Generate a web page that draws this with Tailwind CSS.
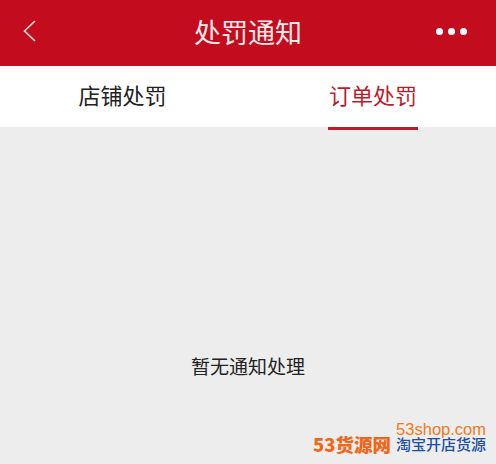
<!DOCTYPE html>
<html lang="zh-CN">
<head>
  <meta charset="UTF-8">
  <meta name="viewport" content="width=device-width, initial-scale=1.0">
  <title>处罚通知</title>
  <script src="https://cdn.jsdelivr.net/npm/@tailwindcss/browser@4"></script>
</head>
<body class="bg-[#ededed] font-['Noto_Sans_CJK_SC',sans-serif]">
  <div class="relative w-[496px] h-[464px] overflow-hidden flex flex-col">
    <!-- Header -->
    <div class="h-[66px] bg-[#c30d1e] flex items-center justify-between text-white">
      <div class="w-[80px] pl-[23px] mt-[-5px]">
        <svg width="13" height="22" viewBox="0 0 13 22" fill="none" stroke="#f6d5d8" stroke-width="1.7"><path d="M12 1 L1.5 11 L12 21"/></svg>
      </div>
      <h1 class="text-[27px] leading-none text-[#fbe9ea] mt-[-4px]">处罚通知</h1>
      <div class="w-[80px] flex justify-end gap-[5px] pr-[29px] mt-[-4px]">
        <span class="w-[7px] h-[7px] rounded-full bg-white"></span>
        <span class="w-[7px] h-[7px] rounded-full bg-white"></span>
        <span class="w-[7px] h-[7px] rounded-full bg-white"></span>
      </div>
    </div>
    <!-- Tabs -->
    <div class="h-[61px] bg-white grid grid-cols-2 text-[22px] leading-none">
      <div class="flex justify-center">
        <span class="pt-[17px] ml-[-3px] text-[#222222]">店铺处罚</span>
      </div>
      <div class="flex justify-center">
        <span class="h-[64px] pt-[17px] px-[1px] ml-[2px] border-b-[3px] border-[#bd1a2c] text-[#bd1a2c]">订单处罚</span>
      </div>
    </div>
    <!-- Empty state -->
    <div class="flex-1 flex justify-center pt-[230px] text-[19px] leading-none text-[#222222]">
      <p class="mt-[-1px]">暂无通知处理</p>
    </div>
    <!-- Watermark -->
    <div class="absolute right-[10px] bottom-[11px] flex flex-col items-end">
      <span class="text-[16.5px] leading-[11px] text-[#f07a1c] font-['Liberation_Sans',sans-serif]">53shop.com</span>
      <div class="flex items-center gap-[5px] leading-none">
        <span class="text-[18.5px] font-black text-[#f0661a]">53货源网</span>
        <span class="text-[15px] font-medium text-[#1c4fa8]">淘宝开店货源</span>
      </div>
    </div>
  </div>
</body>
</html>
